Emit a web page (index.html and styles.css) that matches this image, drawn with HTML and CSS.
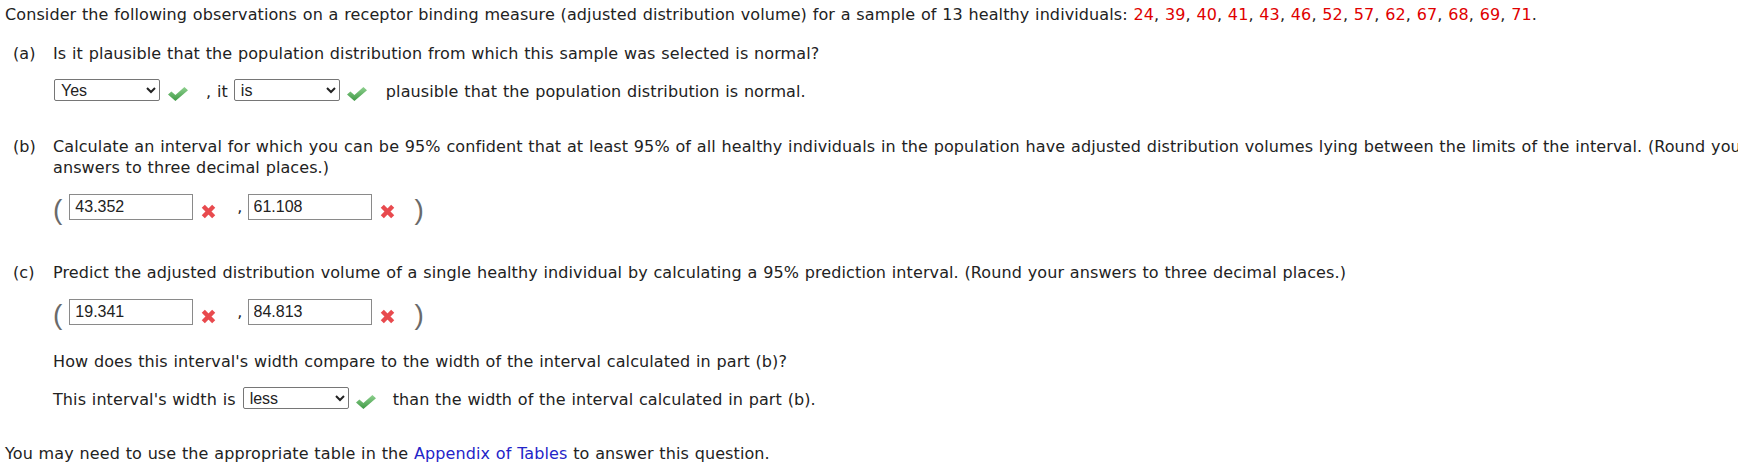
FILE: index.html
```html
<!DOCTYPE html>
<html lang="en">
<head>
<meta charset="utf-8">
<title>Receptor binding measure</title>
<link rel="stylesheet" href="styles.css">
</head>
<body>
<div class="page">
  <p class="intro">Consider the following observations on a receptor binding measure (adjusted distribution volume) for a sample of 13 healthy individuals: <span class="num">24</span>, <span class="num">39</span>, <span class="num">40</span>, <span class="num">41</span>, <span class="num">43</span>, <span class="num">46</span>, <span class="num">52</span>, <span class="num">57</span>, <span class="num">62</span>, <span class="num">67</span>, <span class="num">68</span>, <span class="num">69</span>, <span class="num">71</span>.</p>

  <div class="part part-a">
    <span class="label">(a)</span>
    <div class="body">
      <p class="q">Is it plausible that the population distribution from which this sample was selected is normal?</p>
      <div class="row row-sel">
        <select class="sel"><option>---Select---</option><option selected>Yes</option><option>No</option></select>
        <span class="mark check"><svg width="20" height="14" viewBox="0 0 20 14"><defs><linearGradient id="g1" x1="0" y1="0" x2="0" y2="1"><stop offset="0" stop-color="#8fd18f"/><stop offset="1" stop-color="#3e9944"/></linearGradient></defs><polygon points="0,7.6 3.4,4.4 7.4,8.1 16.4,0 20,3.3 7.4,14" fill="url(#g1)"/></svg></span>
        <span class="txt t-it">, it</span>
        <select class="sel sel-2"><option>---Select---</option><option selected>is</option><option>is not</option></select>
        <span class="mark check check-2"><svg width="20" height="14" viewBox="0 0 20 14"><polygon points="0,7.6 3.4,4.4 7.4,8.1 16.4,0 20,3.3 7.4,14" fill="url(#g1)"/></svg></span>
        <span class="txt t-after">plausible that the population distribution is normal.</span>
      </div>
    </div>
  </div>

  <div class="part part-b">
    <span class="label">(b)</span>
    <div class="body">
      <p class="q">Calculate an interval for which you can be 95% confident that at least 95% of all healthy individuals in the population have adjusted distribution volumes lying between the limits of the interval. (Round your answers to three decimal places.)</p>
      <div class="row row-int">
        <span class="paren">(</span>
        <input class="ans" type="text" value="43.352">
        <span class="mark cross"><svg width="15" height="15" viewBox="0 0 15 15"><path d="M2.3 2.3 L12.7 12.7 M12.7 2.3 L2.3 12.7" stroke="#e84a4e" stroke-width="4.4"/></svg></span>
        <span class="txt comma">,</span>
        <input class="ans ans-2" type="text" value="61.108">
        <span class="mark cross"><svg width="15" height="15" viewBox="0 0 15 15"><path d="M2.3 2.3 L12.7 12.7 M12.7 2.3 L2.3 12.7" stroke="#e84a4e" stroke-width="4.4"/></svg></span>
        <span class="paren paren-close">)</span>
      </div>
    </div>
  </div>

  <div class="part part-c">
    <span class="label">(c)</span>
    <div class="body">
      <p class="q">Predict the adjusted distribution volume of a single healthy individual by calculating a 95% prediction interval. (Round your answers to three decimal places.)</p>
      <div class="row row-int">
        <span class="paren">(</span>
        <input class="ans" type="text" value="19.341">
        <span class="mark cross"><svg width="15" height="15" viewBox="0 0 15 15"><path d="M2.3 2.3 L12.7 12.7 M12.7 2.3 L2.3 12.7" stroke="#e84a4e" stroke-width="4.4"/></svg></span>
        <span class="txt comma">,</span>
        <input class="ans ans-2" type="text" value="84.813">
        <span class="mark cross"><svg width="15" height="15" viewBox="0 0 15 15"><path d="M2.3 2.3 L12.7 12.7 M12.7 2.3 L2.3 12.7" stroke="#e84a4e" stroke-width="4.4"/></svg></span>
        <span class="paren paren-close">)</span>
      </div>
      <p class="q q-how">How does this interval's width compare to the width of the interval calculated in part (b)?</p>
      <div class="row row-sel row-width">
        <span class="txt t-this">This interval's width is</span>
        <select class="sel sel-less"><option>---Select---</option><option selected>less</option><option>greater</option></select>
        <span class="mark check check-2"><svg width="20" height="14" viewBox="0 0 20 14"><polygon points="0,7.6 3.4,4.4 7.4,8.1 16.4,0 20,3.3 7.4,14" fill="url(#g1)"/></svg></span>
        <span class="txt t-than">than the width of the interval calculated in part (b).</span>
      </div>
    </div>
  </div>

  <p class="footer">You may need to use the appropriate table in the <a class="link" href="#">Appendix of Tables</a> to answer this question.</p>
</div>
</body>
</html>
```

FILE: styles.css
```css
* { box-sizing: border-box; }

html, body {
  margin: 0;
  padding: 0;
  overflow: hidden;
  background: #fff;
}

body {
  width: 1738px;
  height: 472px;
  font-family: "DejaVu Sans", Verdana, sans-serif;
  font-size: 16px;
  line-height: 21px;
  letter-spacing: 0.1px;
  word-spacing: 0.55px;
  color: #222;
}

.page {
  width: 1800px;
  padding: 4px 0 0 5px;
}

p { margin: 0; }

.num { color: #e00000; }

.part {
  display: flex;
  align-items: flex-start;
  padding-left: 8px;
}

.label {
  flex: 0 0 40px;
}

.body {
  width: 1732px;
}

.part-a { margin-top: 18px; }
.part-b { margin-top: 35px; }
.part-c { margin-top: 42px; }

.row {
  display: flex;
  align-items: flex-start;
  margin-top: 15px;
}

.row-int { height: 26px; margin-top: 16px; }
.row-sel { height: 22px; }

.txt {
  flex: none;
  margin-top: 2px;
  white-space: nowrap;
}

.sel {
  flex: none;
  width: 106px;
  height: 22px;
  margin: 0 0 0 1px;
  padding: 0 0 0 2px;
  font-family: "Liberation Sans", Arial, sans-serif;
  font-size: 16px;
  letter-spacing: 0;
  word-spacing: 0;
  color: #222;
  background: #fff;
  border: 1px solid #767676;
  border-radius: 2px;
}

.sel-2 { margin-left: 6px; }
.sel-less { margin-left: 7px; }

.mark {
  flex: none;
  display: block;
  line-height: 0;
}

.mark svg { display: block; }

.check {
  margin: 8px 0 0 8px;
}

.check-2 { margin-left: 7px; }

.t-it { margin-left: 18px; }
.t-after { margin-left: 19px; }
.t-than { margin-left: 17px; }

.paren {
  flex: none;
  font-family: "Liberation Sans", Arial, sans-serif;
  font-size: 28px;
  line-height: 28px;
  letter-spacing: 0;
  color: #6a6a6a;
  margin-top: 2px;
}

.paren-close { margin-left: 20px; }

.ans {
  flex: none;
  width: 124px;
  height: 26px;
  margin: 0 0 0 7px;
  padding: 0 0 0 5px;
  font-family: "Liberation Sans", Arial, sans-serif;
  font-size: 16px;
  letter-spacing: 0;
  color: #222;
  background: #fff;
  border: 1px solid #8a8a8a;
  border-radius: 0;
}

.ans-2 { margin-left: 5px; }

.cross {
  margin: 10px 0 0 8px;
}

.comma { margin-left: 21px; }

.q-how { margin-top: 26px; }
.row-width { margin-top: 15px; }

.footer {
  margin-top: 34px;
}

.link {
  color: #2424c8;
  text-decoration: none;
}
```
